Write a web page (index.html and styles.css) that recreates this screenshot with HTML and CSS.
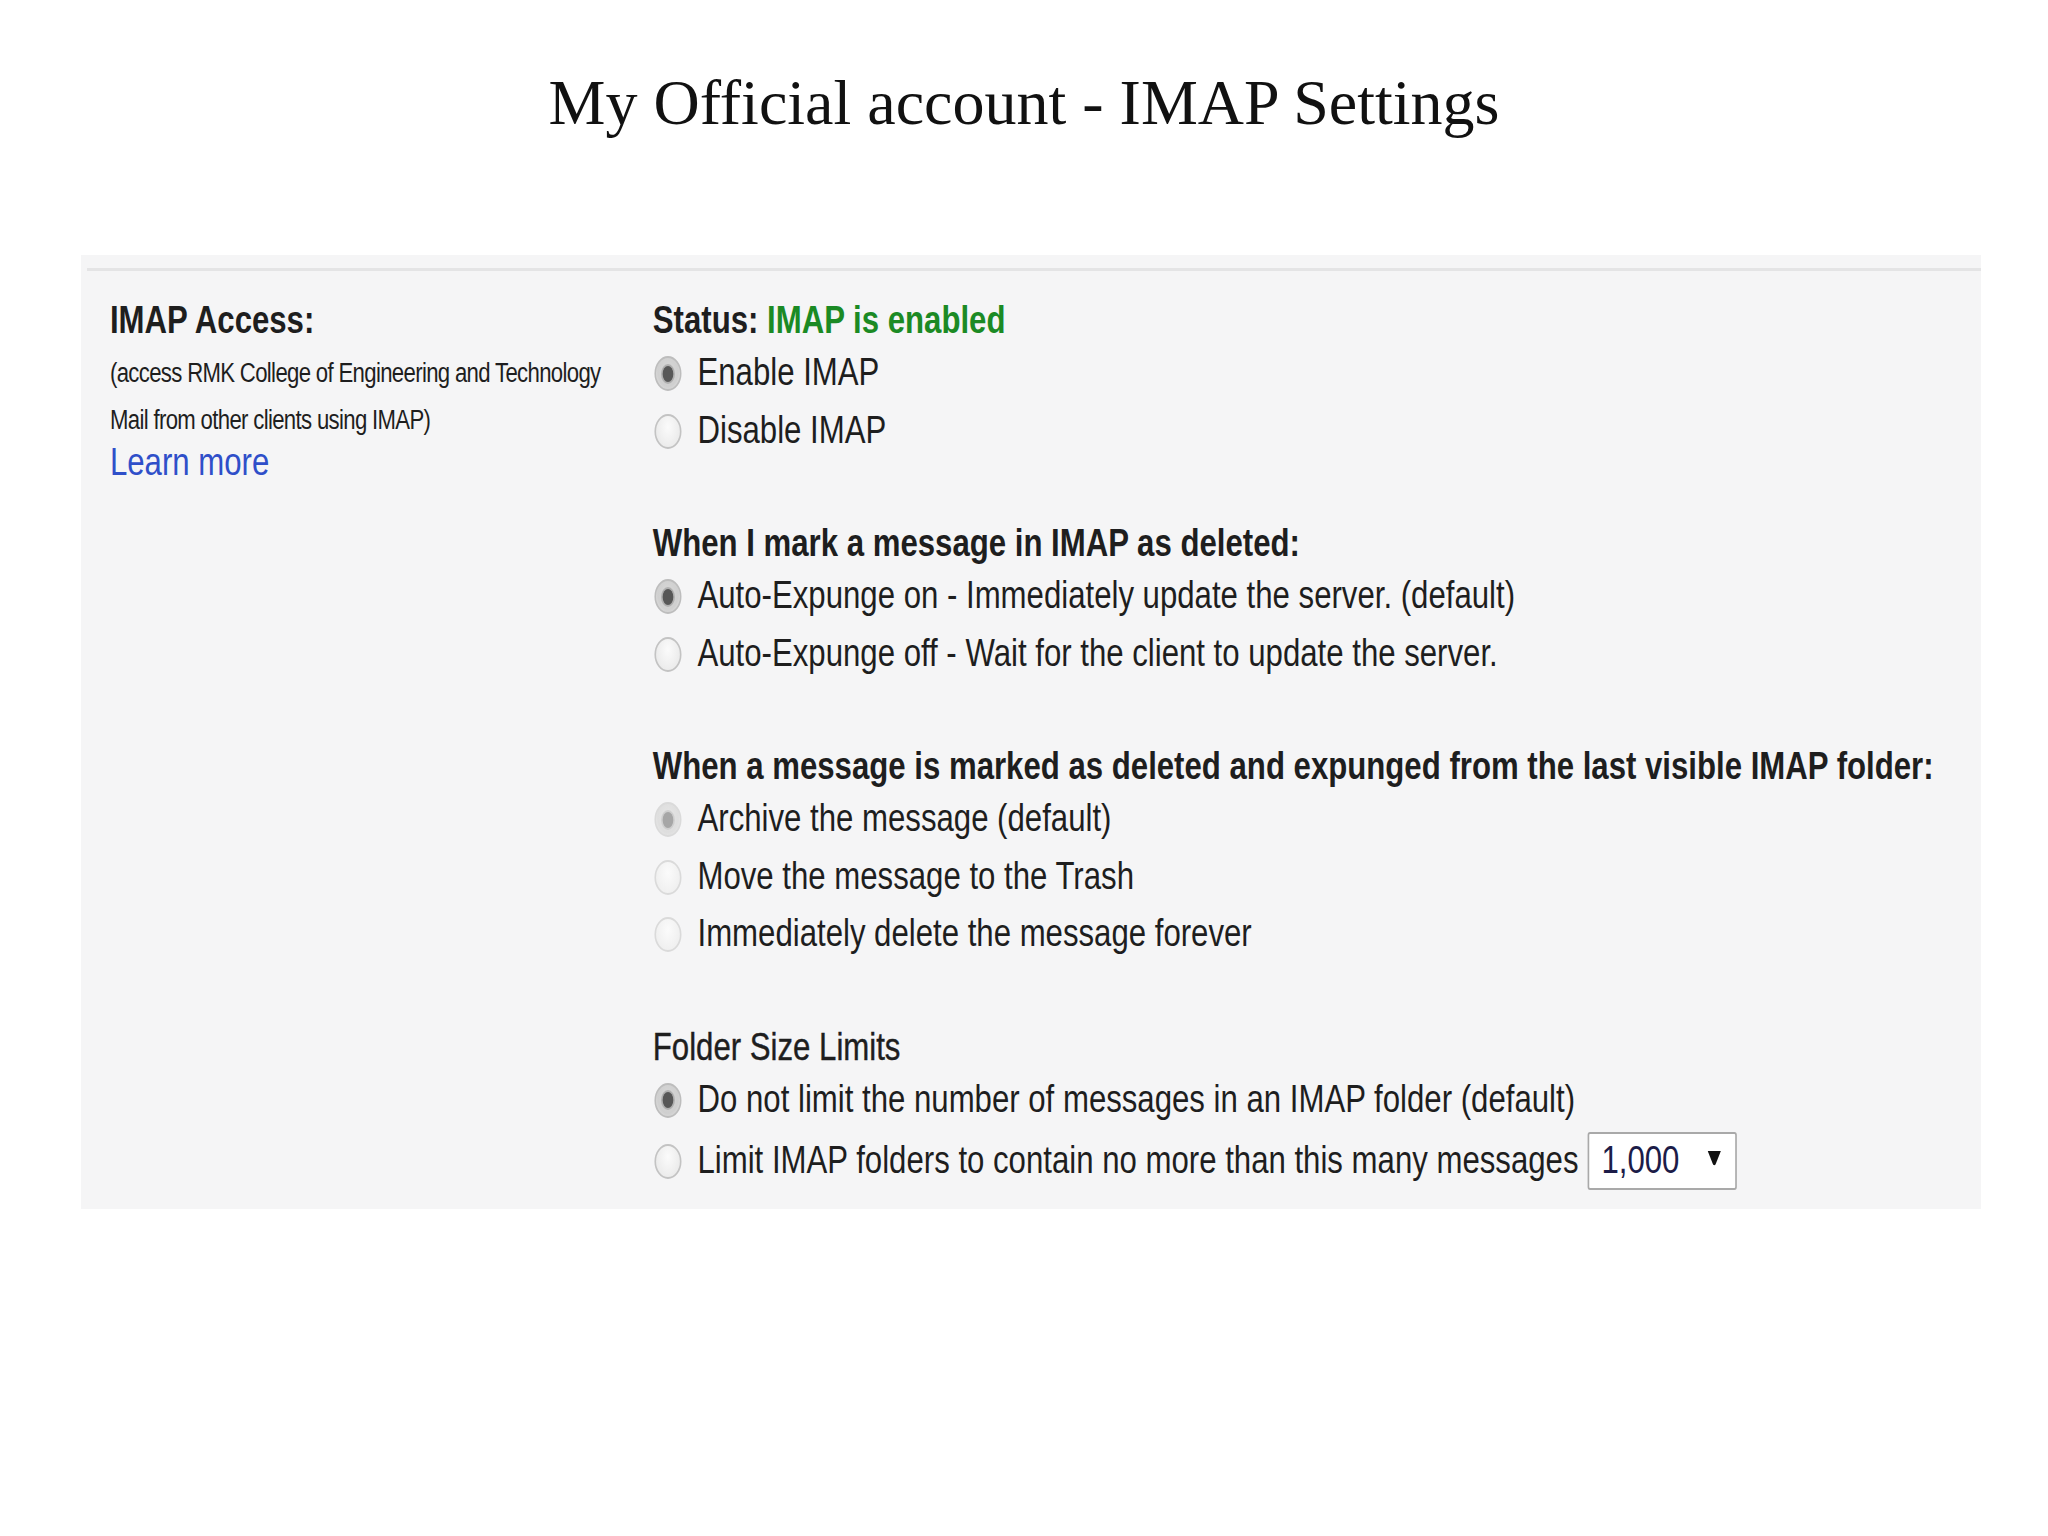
FILE: index.html
```html
<!DOCTYPE html>
<html>
<head>
<meta charset="utf-8">
<title>My Official account - IMAP Settings</title>
<link rel="stylesheet" href="styles.css">
</head>
<body>
<h1 class="title">My Official account - IMAP Settings</h1>
<div class="panel">
  <div class="panel-body">
    <div class="content">
      <div class="label-col">
        <div class="label-title">IMAP Access:</div>
        <div class="label-desc">(access RMK College of Engineering and Technology<br>Mail from other clients using IMAP)</div>
        <a class="learn">Learn more</a>
      </div>
      <div class="options">
        <div class="group">
          <div class="heading">Status: <span class="ok">IMAP is enabled</span></div>
          <div class="row"><span class="radio checked"></span>Enable IMAP</div>
          <div class="row"><span class="radio"></span>Disable IMAP</div>
        </div>
        <div class="group">
          <div class="heading">When I mark a message in IMAP as deleted:</div>
          <div class="row"><span class="radio checked"></span>Auto-Expunge on - Immediately update the server. (default)</div>
          <div class="row"><span class="radio"></span>Auto-Expunge off - Wait for the client to update the server.</div>
        </div>
        <div class="group">
          <div class="heading">When a message is marked as deleted and expunged from the last visible IMAP folder:</div>
          <div class="row"><span class="radio checked dim"></span>Archive the message (default)</div>
          <div class="row"><span class="radio dim"></span>Move the message to the Trash</div>
          <div class="row"><span class="radio dim"></span>Immediately delete the message forever</div>
        </div>
        <div class="group">
          <div class="heading plain">Folder Size Limits</div>
          <div class="row"><span class="radio checked"></span>Do not limit the number of messages in an IMAP folder (default)</div>
          <div class="row row-select"><span class="radio"></span><span class="row-text">Limit IMAP folders to contain no more than this many messages</span><span class="select"><span class="select-value">1,000</span><svg class="select-arrow" width="17" height="16" viewBox="0 0 17 16"><path d="M0.5 1 L16.5 1 L10 14.5 Q8.5 16 7 14.5 Z" fill="#111"/></svg></span></div>
        </div>
      </div>
    </div>
  </div>
</div>
</body>
</html>
```
FILE: styles.css
```css
html, body {
  margin: 0;
  padding: 0;
  background: #ffffff;
}

.title {
  margin: 0;
  padding-top: 63px;
  font-family: "Liberation Serif", "Times New Roman", serif;
  font-weight: normal;
  font-size: 64px;
  line-height: 80px;
  color: #111;
  text-align: center;
}

.panel {
  margin: 112px 0 0 81px;
  width: 1900px;
  height: 954px;
  box-sizing: border-box;
  padding: 13px 0 0 6px;
  background: #f5f5f6;
  font-family: "Liberation Sans", Arial, sans-serif;
  font-size: 38px;
  color: #1e1e1e;
}

.panel-body {
  border-top: 3px solid #e4e4e5;
}

/* the source screenshot is horizontally condensed */
.content {
  transform: scaleX(0.82);
  transform-origin: 0 0;
  padding: 26px 0 0 28px;
  display: grid;
  grid-template-columns: 662px 1fr;
}

.label-title {
  font-weight: bold;
  line-height: 47px;
}

.label-desc {
  margin-top: 6px;
  font-size: 27px;
  letter-spacing: -0.8px;
  line-height: 47px;
  white-space: nowrap;
}

.learn {
  display: block;
  line-height: 36px;
  color: #2f4fc9;
  cursor: pointer;
}

.group + .group {
  margin-top: 61px;
}

.heading {
  font-weight: bold;
  line-height: 47px;
  white-space: nowrap;
}

.heading.plain {
  font-weight: normal;
  -webkit-text-stroke: 0.4px #1e1e1e;
}

.ok {
  color: #1b8a24;
}

.row {
  line-height: 57.5px;
  padding-left: 2px;
  white-space: nowrap;
}

.radio {
  display: inline-block;
  position: relative;
  width: 33px;
  height: 35px;
  box-sizing: border-box;
  margin-right: 19.5px;
  vertical-align: -6px;
  border-radius: 50%;
  border: 2px solid #c3c3c3;
  background: radial-gradient(ellipse at 50% 35%, #fbfbfb 0%, #ececec 70%, #e2e2e2 100%);
}

.radio.checked {
  background: radial-gradient(ellipse at 50% 40%, #d8d8d8 0%, #cfcfcf 60%, #e6e6e6 100%);
  border-color: #bdbdbd;
}

.radio.checked::after {
  content: "";
  position: absolute;
  left: 50%;
  top: 50%;
  width: 13px;
  height: 16px;
  margin: -8px 0 0 -6.5px;
  border-radius: 50%;
  background: #575757;
  box-shadow: 0 0 0 2px #b0b0b0;
}

.radio.dim {
  border-color: #dadada;
  background: radial-gradient(ellipse at 50% 35%, #fbfbfb 0%, #f0f0f0 70%, #e9e9e9 100%);
}

.radio.checked.dim {
  background: radial-gradient(ellipse at 50% 40%, #e6e6e6 0%, #dedede 60%, #ececec 100%);
}

.radio.checked.dim::after {
  background: #a6a6a6;
  box-shadow: 0 0 0 2px #cfcfcf;
}

.row-select {
  display: flex;
  align-items: center;
  height: 62px;
  margin-top: 2px;
}

.row-text {
  line-height: 57.5px;
}

.select {
  display: flex;
  align-items: center;
  justify-content: space-between;
  width: 182px;
  height: 58px;
  box-sizing: border-box;
  margin-left: 11px;
  padding: 0 17px 0 15px;
  background: #ffffff;
  border: 2px solid #a9a9a9;
  border-radius: 3px;
}

.select-value {
  color: #1c1c48;
}

.select-arrow {
  display: block;
  margin-top: -6px;
}
```
